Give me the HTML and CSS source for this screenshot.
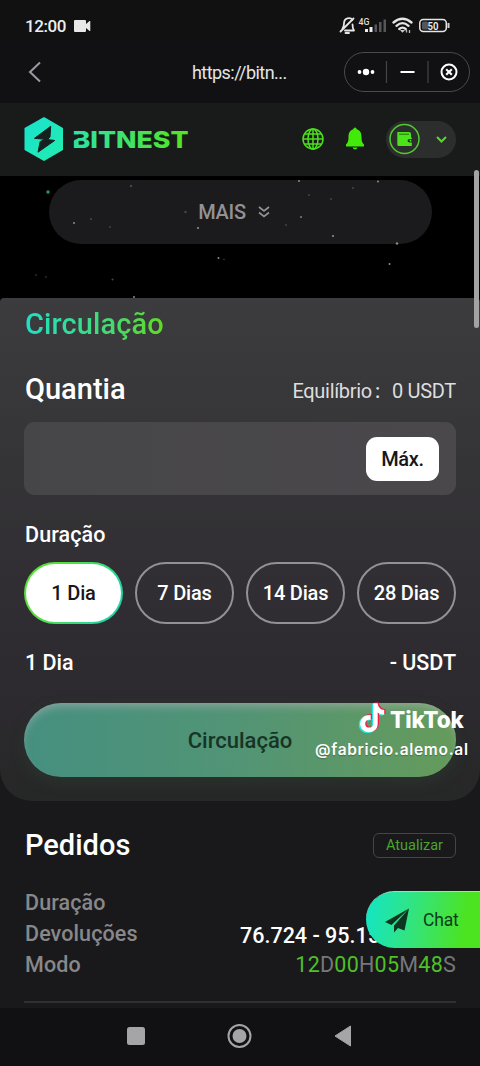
FILE: index.html
```html
<!DOCTYPE html>
<html lang="pt">
<head>
<meta charset="utf-8">
<title>BitNest</title>
<link rel="stylesheet" href="styles.css">
</head>
<body>
<div class="phone">
  <div class="status-bar">
    <span class="clock">12:00</span>
    <svg class="camera" width="18" height="12" viewBox="0 0 18 12"><path fill="#e8e8e8" d="M1 0h10q1 0 1 1v3l3.500-3h.8v10h-.8l-3.500-3v3q0 1-1 1H1q-1 0-1-1V1q0-1 1-1z"/></svg>
    <svg class="status-icons" width="112" height="22" viewBox="338 14 112 22">
      <g fill="none" stroke="#e6e6e6" stroke-width="1.800" stroke-linecap="round" stroke-linejoin="round">
        <path d="M345 30.500H354M342.500 28.500c1.500-2 1.500-3 1.500-5 0-6 6.500-6.500 8.500-3.500M352.500 24.500c0 2.500 .3 4 1.500 6M340.500 31.500 353.500 18.500"/>
        <path d="M345.500 33h3.500"/>
        <path stroke-width="2.300" d="M393.500 22.500Q402.500 15 411.500 22.500M396.500 25.800Q402.500 20.500 408.500 25.800M399.300 29Q402.500 26.300 405.700 29"/>
        <rect x="419.800" y="19.500" width="26.500" height="12" rx="3.500" stroke-width="1.500"/>
      </g>
      <rect x="422" y="21.500" width="6" height="8" rx="1.500" fill="#555"/>
      <path d="M447.500 23h2v5h-2zM400 30h5l-2.500 2.700z" fill="#d0d0d0"/>
      <path d="M406.500 32.500v-3M409.500 30v3" stroke="#bbb" stroke-width="1.300"/>
      <path d="M365 29h3v3h-3zM369.500 27h3v5h-3z" fill="#eee"/>
      <path d="M374.500 24.500h2.500V32h-2.500zM379 22h2.500v10H379zM383.500 19.500h2.500V32h-2.500z" fill="#56565a"/>
      <text class="net-label" x="358.500" y="25" textLength="11" lengthAdjust="spacingAndGlyphs">4G</text>
      <text class="battery-label" x="427.500" y="29.500" textLength="11" lengthAdjust="spacingAndGlyphs">50</text>
    </svg>
  </div>

  <div class="browser-bar">
    <svg class="back" width="14" height="22" viewBox="0 0 14 22"><path d="M13 1.500 3 11 13 20.500" fill="none" stroke="#9a9aa0" stroke-width="2"/></svg>
    <span class="url">https://bitn...</span>
    <div class="capsule">
      <svg width="124" height="38" viewBox="0 0 124 38">
        <g fill="#fff"><circle cx="14.500" cy="19" r="1.900"/><circle cx="21" cy="19" r="3.200"/><circle cx="27.500" cy="19" r="1.900"/><rect x="55.500" y="18" width="14" height="2"/></g>
        <path d="M41.500 8v22M83 8v22" stroke="#44444a" stroke-width="1.200"/>
        <circle cx="104" cy="19" r="7.500" fill="none" stroke="#fff" stroke-width="2"/>
        <path d="M101.200 16.200l5.600 5.600M106.800 16.200l-5.600 5.600" stroke="#fff" stroke-width="2.100"/>
      </svg>
    </div>
  </div>

  <header class="site-header">
    <svg class="logo" width="166" height="46" viewBox="23 116 166 46">
      <defs>
        <linearGradient id="hex" x1="0" x2="1" y2="1"><stop offset="0" stop-color="#19e3ce"/><stop offset="1" stop-color="#22ecad"/></linearGradient>
        <linearGradient id="word" gradientUnits="userSpaceOnUse" x1="73" x2="187" y1="0" y2="0"><stop offset="0" stop-color="#2ce3a5"/><stop offset="1" stop-color="#55e41f"/></linearGradient>
      </defs>
      <path fill="url(#hex)" stroke="url(#hex)" stroke-width="2" stroke-linejoin="round" d="M44 118.200 62 128.500v21L44 160 25.500 149.500v-21z"/>
      <path fill="#14211f" stroke="#14211f" stroke-linejoin="round" d="M50.700 126.300 34.500 138.300 45 139.300 40.200 141.500 38 152.200 54.700 140.500 47.500 139.500 50 137z"/>
      <text class="wordmark" x="72.500" y="148" textLength="116" lengthAdjust="spacingAndGlyphs" fill="url(#word)">BITNEST</text>
      <path fill="#191a1a" d="M71 134.500h9.500v2.500l-9.500 5z"/>
    </svg>
    <div class="header-actions">
      <svg width="24" height="24" viewBox="0 0 24 24"><g fill="none" stroke="#4be01c" stroke-width="1.500"><circle cx="12" cy="12" r="10"/><ellipse cx="12" cy="12" rx="5" ry="10"/><path d="M12 2v20M2 12h20M3.500 7h17M3.500 17h17"/></g></svg>
      <svg class="bell" width="20" height="24" viewBox="0 0 20 24"><path fill="#41ea08" d="M10 .5q1.500 0 1.700 1.800C15.500 3.300 16.500 6.500 16.500 10c0 4 .8 6 2.500 7.500v2H1v-2C2.700 16 3.500 14 3.500 10c0-3.500 1-6.700 4.800-7.700Q8.500.5 10 .5zM7.500 20.500h5q-.8 2-2.500 2t-2.500-2z"/></svg>
      <div class="wallet">
        <svg width="70" height="36" viewBox="0 0 70 36">
          <circle cx="18.500" cy="18" r="14.500" fill="none" stroke="#53c92e" stroke-width="1.500"/>
          <path fill="#4be41a" d="M11.500 11h11.500q2 0 2 2v3.500h.8V18h-2.300q-2 0-2 1.700t2 1.800h2.300V25h-13q-1.500 0-1.500-1.500V12z"/>
          <path d="M13 13.200h10" stroke="#276f18" stroke-width="1"/><circle cx="24.500" cy="19.700" r=".9" fill="#4be41a"/>
          <path d="M51 16l4.500 4.500L60 16" fill="none" stroke="#50dd1e" stroke-width="2"/>
        </svg>
      </div>
    </div>
  </header>

  <section class="hero">
    <div class="more">MAIS
      <svg width="12" height="12" viewBox="0 0 12 12"><path d="M1 1l5 4 5-4M1 6.500l5 4 5-4" fill="none" stroke="#929294" stroke-width="1.700"/></svg>
    </div>
    <svg class="stars" width="480" height="122" viewBox="0 176 480 122">
      <circle cx="48" cy="192" r="1.700" fill="#1c9b62"/>
      <g fill="#8b8b8b"><circle cx="198" cy="228" r="1.100"/><circle cx="301" cy="217" r=".9"/><circle cx="333" cy="236" r="1.100"/><circle cx="397" cy="243.500" r="1.200"/><circle cx="389.500" cy="264" r="1"/><circle cx="218.500" cy="258" r="1"/><circle cx="378" cy="181.500" r="1"/><circle cx="299" cy="181" r="1"/><circle cx="134" cy="297" r="1"/><circle cx="74" cy="223" r="1"/></g>
      <g fill="#484848"><circle cx="131" cy="186" r="1.200"/><circle cx="185.500" cy="212" r="1.200"/><circle cx="91" cy="219" r="1"/><circle cx="110" cy="227" r=".9"/><circle cx="309" cy="195" r=".9"/><circle cx="331" cy="199" r=".9"/><circle cx="353" cy="188" r="1"/><circle cx="286" cy="225" r=".9"/><circle cx="112.500" cy="279.500" r="1"/><circle cx="46" cy="277" r=".8"/><circle cx="36" cy="275" r=".8"/><circle cx="224" cy="259.500" r=".7"/></g>
    </svg>
  </section>

  <main class="content">
    <section class="card">
      <h1 class="card-title">Circulação</h1>
      <div class="amount-row">
        <h2 class="heading">Quantia</h2>
        <span class="balance">Equilíbrio<span class="colon">:</span>0 USDT</span>
      </div>
      <div class="amount-field"><button class="max">Máx.</button></div>
      <div class="label">Duração</div>
      <div class="durations">
        <button class="duration selected">1 Dia</button>
        <button class="duration">7 Dias</button>
        <button class="duration">14 Dias</button>
        <button class="duration">28 Dias</button>
      </div>
      <div class="summary"><span>1 Dia</span><span>- USDT</span></div>
      <button class="submit">Circulação</button>
    </section>

    <section class="orders">
      <div class="orders-head"><h2 class="heading">Pedidos</h2><button class="refresh">Atualizar</button></div>
      <div class="order">
        <div class="line"><span>Duração</span></div>
        <div class="line"><span>Devoluções</span><span class="returns">76.724 - 95.152</span></div>
        <div class="line"><span>Modo</span><span class="countdown"><b>12</b>D<b>00</b>H<b>05</b>M<b>48</b>S</span></div>
      </div>
    </section>
  </main>

  <nav class="nav-bar">
    <svg width="480" height="58" viewBox="0 1008 480 58"><rect x="127" y="1027" width="18" height="18" rx="2.500" fill="#a5a5a8"/><circle cx="239.500" cy="1036" r="11" fill="none" stroke="#a5a5a8" stroke-width="2"/><circle cx="239.500" cy="1036" r="7" fill="#a5a5a8"/><path d="M335 1036 350.500 1026v20z" fill="#a5a5a8" stroke="#a5a5a8" stroke-linejoin="round"/></svg>
  </nav>

  <div class="scrollbar"></div>
  <div class="chat">
    <svg width="25" height="25" viewBox="0 0 25 25"><path fill="#0e3520" d="M24 .5 0 14l6.500 3zM24 .5 9 17.500v7l4-4.500 6.500 2.500z"/></svg>
    <span>Chat</span>
  </div>
  <div class="watermark">
    <div class="brand">
      <svg width="28" height="33" viewBox="0 0 28 33">
        <defs><path id="note" d="M15 1h4.500c.4 4 2.800 6.400 6.500 6.800v4.700c-2.600 0-4.700-.8-6.500-2.200v11.200C19.500 33 2 32.500 2 21.500c0-6 5-9.500 10.500-8.800v5C9.500 17 7 18.700 7 21.400c0 5.400 8 5 8 0z"/></defs>
        <use href="#note" x="-1.200" y="1.200" fill="#25e5e2"/><use href="#note" x="1.500" y="-.6" fill="#f51b4c"/><use href="#note" x=".2" y=".3" fill="#fff"/>
      </svg>
      <span class="tiktok">TikTok</span>
    </div>
    <div class="handle">@fabricio.alemo.al</div>
  </div>
</div>
</body>
</html>
```
FILE: styles.css
```css
* { box-sizing: border-box; }
body { margin: 0; background: #111113; font-family: Roboto, "Liberation Sans", sans-serif; color: #fff; }
button { font: inherit; color: inherit; border: 0; padding: 0; background: none; }
h1, h2 { margin: 0; font-weight: 500; }
svg { display: block; flex: none; }
.phone { position: relative; width: 480px; height: 1066px; overflow: hidden; display: flex; flex-direction: column; }

.status-bar { height: 42px; flex: none; display: flex; align-items: center; padding: 10px 30px 0 25px; background: #111112; }
.clock { font-size: 17px; font-weight: 500; letter-spacing: -.4px; color: #ededed; width: 49px; line-height: 32px; }
.camera { margin-top: -1px; }
.status-icons { margin-left: auto; margin-top: -2px; }
.net-label { font-size: 9px; font-weight: 500; fill: #ddd; }
.battery-label { font-size: 10px; font-weight: 600; fill: #eee; }

.browser-bar { height: 60px; flex: none; display: flex; align-items: center; padding: 0 10px 0 27px; background: #111114; }
.url { margin-left: 151px; font-size: 18px; letter-spacing: -.55px; color: #e5e5e7; }
.capsule { margin-left: auto; width: 126px; height: 40px; border: 1px solid #4a4a4e; border-radius: 20px; }

.site-header { height: 74px; flex: none; display: flex; align-items: center; justify-content: space-between; padding: 0 24px 0 23px; background: #191a1a; box-shadow: inset 0 1px #121216; }
.wordmark { font: 800 23.500px Inter, Roboto, sans-serif; }
.header-actions { display: flex; align-items: center; }
.bell { margin: 0 21px 0 20px; }
.wallet { width: 70px; height: 37px; border-radius: 19px; background: #2c2e2d; }

.hero { position: relative; height: 122px; flex: none; padding-top: 4px; background: #000; }
.stars { position: absolute; inset: 0; }
.more { width: 383px; height: 64px; margin-left: 49px; border-radius: 32px; background: #1b1b1d; display: flex; align-items: center; justify-content: center; gap: 12px; padding-right: 13px; color: #929294; font-size: 20px; font-weight: 500; letter-spacing: -.3px; }

.content { flex: none; background: linear-gradient(#000 20px, #19191b 20px); }
.card { height: 503px; padding: 8px 24px 0 25px; border-radius: 4px 4px 32px 32px; background: linear-gradient(#3c3c3e, #343336 35%, #2f2c31 68%, #2c2a2e 82%, #262727); }
.card-title { width: 139px; font-size: 29px; letter-spacing: .1px; line-height: 36px; background: linear-gradient(90deg, #20dfc5, #46da70 62%, #60db22); -webkit-background-clip: text; background-clip: text; color: transparent; }
.amount-row { display: flex; justify-content: space-between; height: 36px; margin-top: 29px; }
.heading { font-size: 29px; line-height: 36px; }
.balance { font-size: 20px; letter-spacing: -.3px; line-height: 41px; color: #dededf; }
.colon { display: inline-block; width: 20px; padding-left: 3px; font-weight: 500; }
.amount-field { display: flex; align-items: center; justify-content: flex-end; height: 73px; margin: 15px 0 0 -1px; padding-right: 17px; border-radius: 11px; background: linear-gradient(90deg, #464648, #4b484c); }
.max { width: 73px; height: 44px; border-radius: 11px; background: #fff; color: #171719; font-size: 20px; font-weight: 500; letter-spacing: -.3px; }
.label { margin-top: 24px; font-size: 21.500px; font-weight: 500; letter-spacing: .1px; line-height: 32px; }
.durations { display: grid; grid-template-columns: repeat(4, 99px); justify-content: space-between; margin: 11px 0 0 -1px; }
.duration { height: 62px; border: 2px solid #929195; border-radius: 31px; font-size: 20px; font-weight: 500; letter-spacing: -.2px; }
.selected { color: #171719; border-color: transparent; background: linear-gradient(#fff, #fff) padding-box, linear-gradient(120deg, #58e03a 30%, #20d4a5 85%) border-box; }
.summary { display: flex; justify-content: space-between; margin-top: 23px; font-size: 21.500px; font-weight: 500; line-height: 32px; }
.submit { display: block; width: 432px; height: 74px; margin: 24px 0 0 -1px; border-radius: 37px; background: linear-gradient(90deg, #469080, #529475 50%, #659b5b); color: #163526; font-size: 22px; font-weight: 500; box-shadow: inset 0 6px 10px -3px rgba(190, 180, 190, .55), 0 6px 16px rgba(50, 100, 60, .2); }

.orders { height: 207px; padding: 26px 24px 0 25px; }
.orders-head { display: flex; justify-content: space-between; align-items: center; }
.refresh { width: 83px; height: 25px; border: 1px solid #454549; border-radius: 6px; color: #4aa52d; font-size: 14.500px; }
.order { margin: 24px 0 0 -1px; padding-left: 1px; height: 116px; border-bottom: 2px solid #303032; }
.line { display: flex; justify-content: space-between; height: 31px; line-height: 31px; font-size: 21.500px; font-weight: 500; letter-spacing: .1px; color: #88888a; }
.returns { color: #fff; padding-top: 2px; width: 216px; letter-spacing: 0; }
.countdown { font-weight: 400; letter-spacing: .25px; color: #77777a; }
.countdown b { font-weight: 400; color: #4ec02a; }

.nav-bar { height: 58px; flex: none; background: #111113; }
.scrollbar { position: absolute; right: 1px; top: 170px; width: 5px; height: 158px; border-radius: 3px; background: #a3a3a3; }
.chat { position: absolute; right: 0; top: 891px; width: 114px; height: 57px; padding-left: 19px; display: flex; align-items: center; gap: 13px; border-radius: 29px 0 0 29px; border-top: 1px solid #86edb0; background: linear-gradient(100deg, #16e5c0 5%, #35e477 45%, #4ce321 85%); color: #103c1c; font-size: 17.500px; letter-spacing: -.2px; }
.watermark { position: absolute; left: 315px; top: 702px; }
.brand { display: flex; align-items: center; margin-left: 43px; gap: 4px; }
.tiktok { font: 800 22.500px/30px Inter, Roboto, sans-serif; letter-spacing: -.1px; margin-top: 2px; }
.handle { margin-top: 5px; font: 600 15.500px/20px Inter, Roboto, sans-serif; letter-spacing: .7px; white-space: nowrap; text-shadow: 0 1px 1px rgba(0, 0, 0, .25); }
```
